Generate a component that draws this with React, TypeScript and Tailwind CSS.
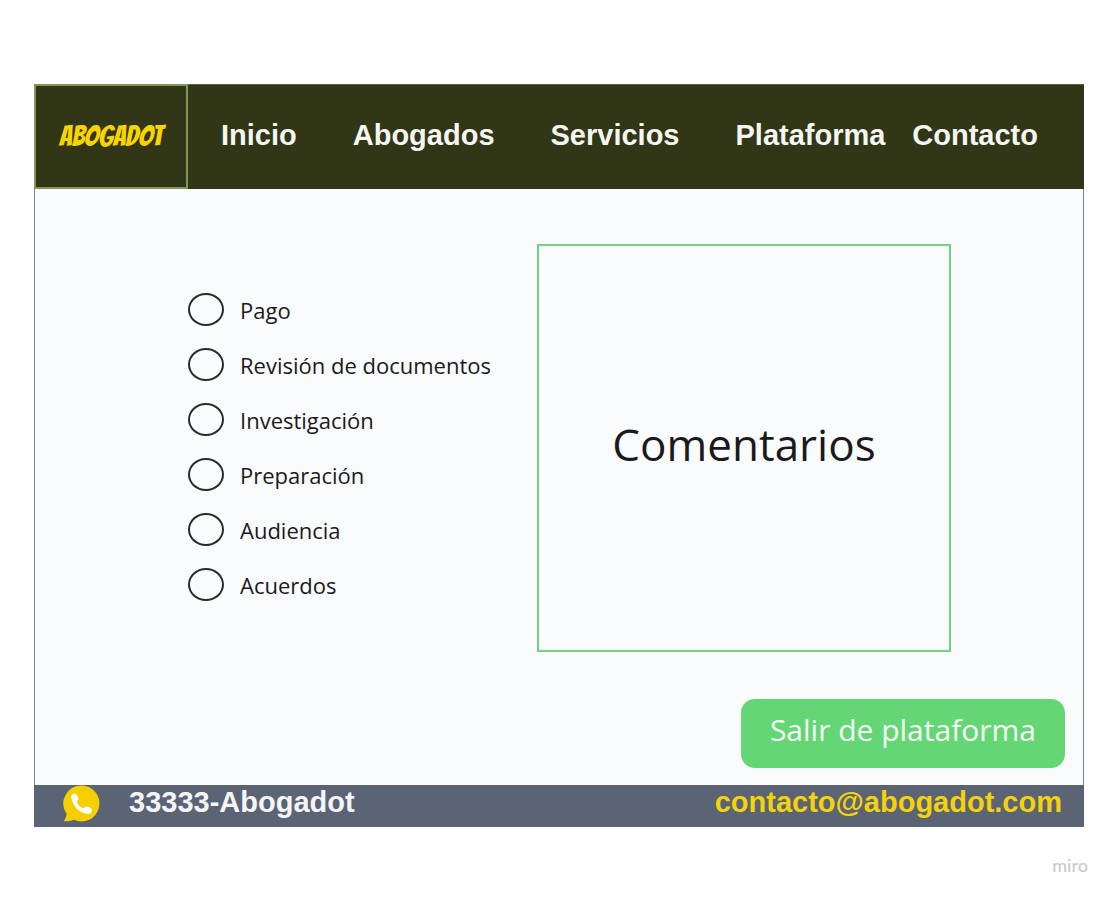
const links = ["Inicio", "Abogados", "Servicios", "Plataforma"];

const steps = [
  "Pago",
  "Revisión de documentos",
  "Investigación",
  "Preparación",
  "Audiencia",
  "Acuerdos",
];

function PhoneBubble() {
  return (
    <svg viewBox="0 0 37 37" className="size-[37px]" aria-hidden="true">
      <path
        d="M18.5 0.5a18 18 0 1 1-7.7 34.3C7.6 36 4 36.4 0.6 36.3c1.7-2 2.7-4.6 3.1-7.4A18 18 0 0 1 18.5 0.5Z"
        fill="#f5d000"
      />
      <path
        d="M9.2 9.6c1.2-.9 2.6-1.2 3.6-.5 1.3 1 2.2 2.8 2.5 4.5.2 1.3-.3 1.9-1 2.5-.5.5-.5 1-.2 1.6 1.3 2.4 3.3 4.3 5.8 5.4.6.3 1 .1 1.5-.4.7-.8 1.3-1.4 2.4-1.2 1.8.3 3.5.8 4.5 1.9.7.9.6 3-.2 4.3-.7 1-2 1.4-3.6 1.2C16.5 28 9.7 21.3 8.3 12.5c-.2-1.3.1-2.3.9-2.9Z"
        fill="#ffffff"
      />
    </svg>
  );
}

export default function App() {
  return (
    <div className="bg-white pt-[84px] pr-[30px] pl-[34px] font-['Open_Sans',sans-serif] text-[#1a1a1a]">
      <header className="flex h-[105px] border-t border-[#59604a] bg-[#313617] font-['Liberation_Sans',Arial,sans-serif] text-[29px] leading-8 font-bold text-[#f5f6f1]">
        <a
          href="#inicio"
          className="-mt-px flex w-[154px] shrink-0 items-center justify-center border-2 border-[#84955a] pb-[2px] font-['Bangers','Liberation_Sans',sans-serif] text-[29px] font-normal text-[#f8d400]"
        >
          ABOGADOT
        </a>
        <nav className="flex flex-1 items-center justify-between pr-[46px] pb-1 pl-[33px]">
          <div className="flex gap-14">
            {links.map((link) => (
              <a key={link} href={"#" + link.toLowerCase()}>
                {link}
              </a>
            ))}
          </div>
          <a href="#contacto">Contacto</a>
        </nav>
      </header>

      <main className="border-x border-[#7e8288] bg-[#fafbfd] pt-[55px] pb-[17px]">
        <div className="flex pr-[132px] pl-[153px]">
          <fieldset className="flex w-[349px] shrink-0 flex-col gap-[22px] pt-[49px]">
            {steps.map((step) => (
              <label key={step} className="flex h-[33px] items-center gap-4 text-[22px]">
                <input
                  type="radio"
                  name="etapa"
                  className="h-[33px] w-9 shrink-0 appearance-none rounded-[50%] border-2 border-[#2a2a2c] checked:bg-[#65d675]"
                />
                <span className="leading-7">{step}</span>
              </label>
            ))}
          </fieldset>
          <section className="flex h-[408px] flex-1 items-center justify-center border-2 border-[#72d383]">
            <h1 className="pb-2 text-[44px] leading-[60px]">Comentarios</h1>
          </section>
        </div>
        <div className="mt-[47px] flex justify-end pr-[18px]">
          <button
            type="button"
            className="h-[69px] rounded-[14px] bg-[#65d675] px-[29px] pb-2 text-[30px] text-[#f6fdf5]"
          >
            Salir de plataforma
          </button>
        </div>
      </main>

      <footer className="flex h-[42px] justify-between bg-[#5a6475] pr-[22px] pl-[29px] font-['Liberation_Sans',Arial,sans-serif] text-[29px] leading-[34px] font-bold">
        <a href="tel:33333" className="flex items-start gap-[29px] text-[#f5f5f5]">
          <PhoneBubble />
          <span>33333-Abogadot</span>
        </a>
        <a href="mailto:contacto@abogadot.com" className="text-[#f5d20a]">
          contacto@abogadot.com
        </a>
      </footer>

      <p className="-mr-1 pt-7 text-right font-['Lato',sans-serif] text-[18px] leading-5 font-medium text-[#cac8d5]">
        miro
      </p>
    </div>
  );
}
